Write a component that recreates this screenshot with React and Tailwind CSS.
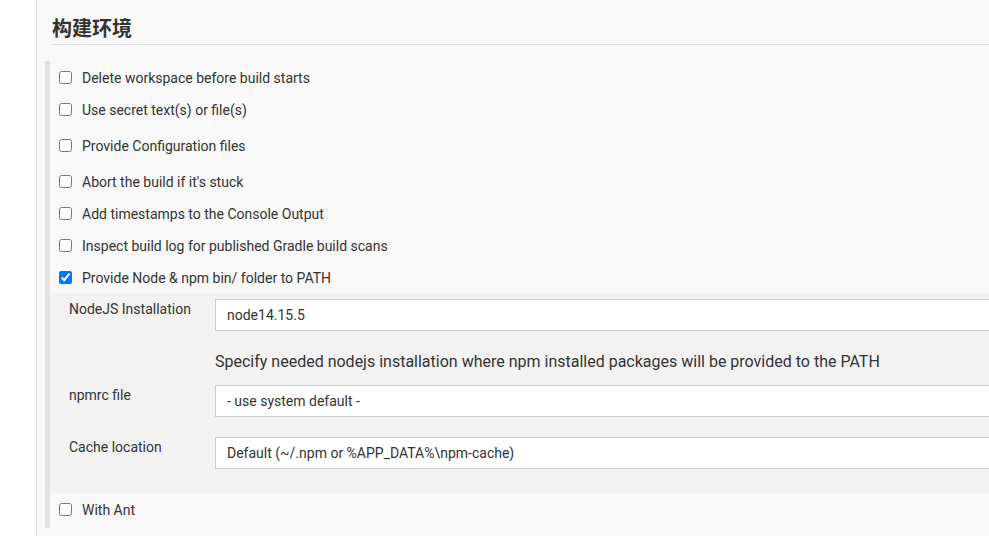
import React from "react";

function CheckRow({ label, checked = false, h = "h-[32px]" }) {
  return (
    <div className={`flex items-center ${h} pl-[9px] gap-[10px]`}>
      <input
        type="checkbox"
        checked={checked}
        readOnly
        className="m-0 w-[13px] h-[13px] shrink-0"
      />
      <span className="pt-[2px] text-[14px] text-[#333]">{label}</span>
    </div>
  );
}

function Field({ label, value }) {
  return (
    <div className="flex">
      <div className="w-[146px] shrink-0 text-[14px] leading-[20px] text-[#333]">{label}</div>
      <div className="w-[900px] shrink-0 h-[32px] bg-white border border-[#ccc] flex items-center pl-[11px] text-[14px] text-[#333]">
        {value}
      </div>
    </div>
  );
}

export default function App() {
  return (
    <div
      className="flex w-[989px] h-[536px] overflow-hidden bg-white"
      style={{ fontFamily: "Roboto, 'Noto Sans', sans-serif" }}
    >
      <div className="w-[37px] shrink-0 bg-white border-r border-[#dcdcdc]" />
      <div className="flex-1 min-w-0 bg-[#f8f8f8] pl-[8px] overflow-hidden">
        <div
          className="ml-[7px] mt-[14px] pb-[2px] border-b border-[#dedede] text-[20px] leading-[28px] font-bold text-[#333]"
          style={{ fontFamily: "'Noto Sans CJK SC', sans-serif" }}
        >
          构建环境
        </div>
        <div className="mt-[16px] border-l-[5px] border-[#e2e2e2] pb-[3px]">
          <CheckRow label="Delete workspace before build starts" />
          <CheckRow label="Use secret text(s) or file(s)" />
          <CheckRow label="Provide Configuration files" h="h-[40px]" />
          <CheckRow label="Abort the build if it's stuck" />
          <CheckRow label="Add timestamps to the Console Output" />
          <CheckRow label="Inspect build log for published Gradle build scans" />
          <CheckRow label="Provide Node & npm bin/ folder to PATH" checked />
          <div className="bg-[#f2f2f2] pl-[19px] pt-[6px] pb-[24px] overflow-hidden">
            <Field label="NodeJS Installation" value="node14.15.5" />
            <div className="ml-[146px] h-[54px] pt-[21px] text-[16px] leading-[20px] text-[#333] whitespace-nowrap">
              Specify needed nodejs installation where npm installed packages will be provided to the PATH
            </div>
            <Field label="npmrc file" value="- use system default -" />
            <div className="h-[20px]" />
            <Field label="Cache location" value="Default (~/.npm or %APP_DATA%\npm-cache)" />
          </div>
          <CheckRow label="With Ant" />
        </div>
      </div>
    </div>
  );
}
